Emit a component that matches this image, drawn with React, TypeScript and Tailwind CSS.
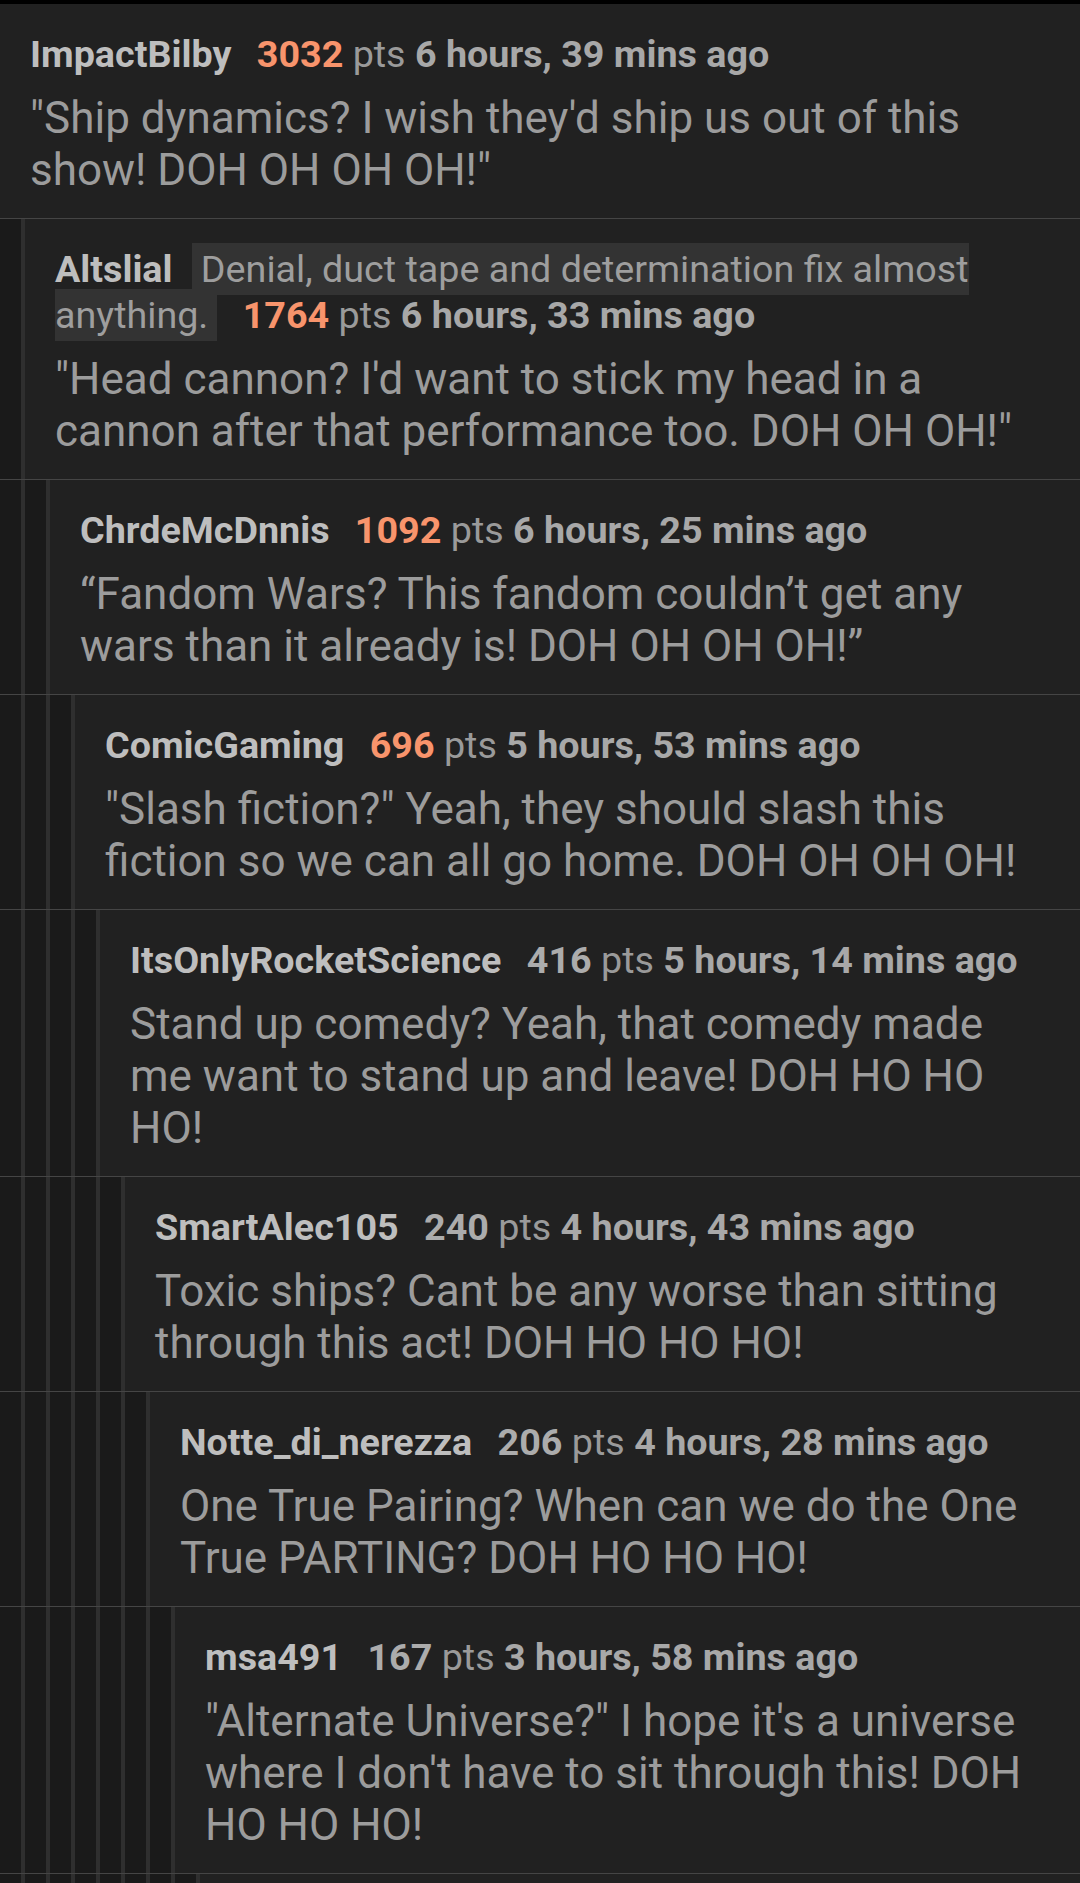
import React from 'react';

type Comment = {
  depth: number;
  user: string;
  flair?: string;
  points: number;
  hot: boolean;
  time: string;
  body: string;
};

const comments: Comment[] = [
  {
    depth: 0,
    user: 'ImpactBilby',
    points: 3032,
    hot: true,
    time: '6 hours, 39 mins ago',
    body: '"Ship dynamics? I wish they\'d ship us out of this show! DOH OH OH OH!"',
  },
  {
    depth: 1,
    user: 'Altslial',
    flair: 'Denial, duct tape and determination fix almost anything.',
    points: 1764,
    hot: true,
    time: '6 hours, 33 mins ago',
    body: '"Head cannon? I\'d want to stick my head in a cannon after that performance too. DOH OH OH!"',
  },
  {
    depth: 2,
    user: 'ChrdeMcDnnis',
    points: 1092,
    hot: true,
    time: '6 hours, 25 mins ago',
    body: '\u201cFandom Wars? This fandom couldn\u2019t get any wars than it already is! DOH OH OH OH!\u201d',
  },
  {
    depth: 3,
    user: 'ComicGaming',
    points: 696,
    hot: true,
    time: '5 hours, 53 mins ago',
    body: '"Slash fiction?" Yeah, they should slash this fiction so we can all go home. DOH OH OH OH!',
  },
  {
    depth: 4,
    user: 'ItsOnlyRocketScience',
    points: 416,
    hot: false,
    time: '5 hours, 14 mins ago',
    body: 'Stand up comedy? Yeah, that comedy made me want to stand up and leave! DOH HO HO HO!',
  },
  {
    depth: 5,
    user: 'SmartAlec105',
    points: 240,
    hot: false,
    time: '4 hours, 43 mins ago',
    body: 'Toxic ships? Cant be any worse than sitting through this act! DOH HO HO HO!',
  },
  {
    depth: 6,
    user: 'Notte_di_nerezza',
    points: 206,
    hot: false,
    time: '4 hours, 28 mins ago',
    body: 'One True Pairing? When can we do the One True PARTING? DOH HO HO HO!',
  },
  {
    depth: 7,
    user: 'msa491',
    points: 167,
    hot: false,
    time: '3 hours, 58 mins ago',
    body: '"Alternate Universe?" I hope it\'s a universe where I don\'t have to sit through this! DOH HO HO HO!',
  },
];

const Stripes: React.FC<{ depth: number }> = ({ depth }) => (
  <>
    {Array.from({ length: depth }).map((_, i) => (
      <div key={i} className="flex w-[25px] shrink-0">
        <div className="w-[21px] bg-[#1a1a1a]"></div>
        <div className="w-[4px] bg-[#2f2f2f]"></div>
      </div>
    ))}
  </>
);

const CommentRow: React.FC<{ c: Comment }> = ({ c }) => (
  <div className="flex border-b border-[#454545]">
    <Stripes depth={c.depth} />
    <div className="flex-1 min-w-0 pl-[30px] pr-[36px] pt-[27px] pb-[22px]">
      <div className="text-[37.7px] leading-[46px] text-[#9a9a9a]">
        <span className="font-bold text-[#bebebe]">{c.user}</span>{' '}
        {c.flair && (
          <>
            <span className="ml-[10px] bg-[#333333] px-[9px] py-[4px] text-[#9e9e9e]">{c.flair}</span>{' '}
          </>
        )}
        <span className={`ml-[16px] font-bold ${c.hot ? 'text-[#f8946c]' : 'text-[#acacac]'}`}>{c.points}</span>{' '}
        pts <span className="font-bold text-[#a8a8a8]">{c.time}</span>
      </div>
      <p className="mt-[15px] text-[44px] leading-[52px] text-[#9c9c9c]">{c.body}</p>
    </div>
  </div>
);

const App: React.FC = () => {
  return (
    <div className="h-[1883px] flex flex-col overflow-hidden bg-[#212121] font-[Roboto,sans-serif]">
      <div className="h-[4px] shrink-0 bg-black"></div>
      {comments.map((c) => (
        <CommentRow key={c.user} c={c} />
      ))}
      {/* next reply, cut off by the bottom of the screen */}
      <div className="flex flex-1">
        <Stripes depth={8} />
        <div className="flex-1"></div>
      </div>
    </div>
  );
};

export default App;
